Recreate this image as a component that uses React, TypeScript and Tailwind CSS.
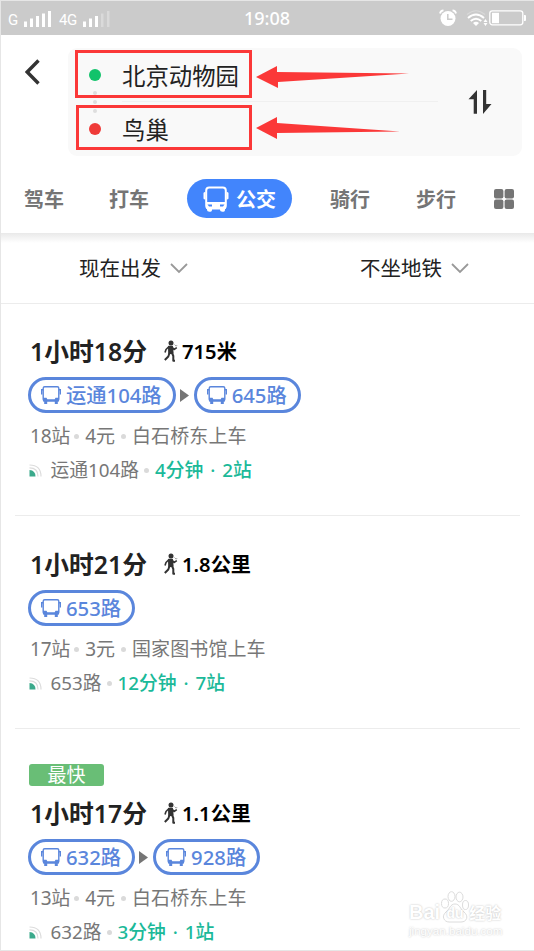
interface Route {
  badge?: string;
  duration: string;
  walk: string;
  lines: string[];
  stops: string;
  price: string;
  board: string;
  next: string;
  wait: string;
  away: string;
}

const routes: Route[] = [
  {
    duration: '1小时18分',
    walk: '715米',
    lines: ['运通104路', '645路'],
    stops: '18站',
    price: '4元',
    board: '白石桥东上车',
    next: '运通104路',
    wait: '4分钟',
    away: '2站',
  },
  {
    duration: '1小时21分',
    walk: '1.8公里',
    lines: ['653路'],
    stops: '17站',
    price: '3元',
    board: '国家图书馆上车',
    next: '653路',
    wait: '12分钟',
    away: '7站',
  },
  {
    badge: '最快',
    duration: '1小时17分',
    walk: '1.1公里',
    lines: ['632路', '928路'],
    stops: '13站',
    price: '4元',
    board: '白石桥东上车',
    next: '632路',
    wait: '3分钟',
    away: '1站',
  },
];

function StatusBar() {
  return (
    <div className="h-[34px] shrink-0 bg-[#cbcbcb] text-white flex items-center justify-between pl-[7px] pr-[8px]">
      <div className="flex items-center w-[180px] font-['Roboto'] text-[15px]">
        <span className="w-[15px] mt-[4px]">G</span>
        <svg width="28" height="18" viewBox="0 0 28 18" fill="currentColor" className="mt-px">
          <path d="M1 11.5h3V17H1zM7 8.5h3V17H7zM13 6h3v11h-3zM19 3.5h3V17h-3zM25 1h3v16h-3z" />
        </svg>
        <span className="ml-[8px] w-[23px] mt-[4px] tracking-[-0.5px]">4G</span>
        <svg width="28" height="18" viewBox="0 0 28 18" fill="currentColor" className="mt-px">
          <path d="M1 11.5h3V17H1zM7 8.5h3V17H7zM13 6h3v11h-3z" />
          <path d="M19 3.5h2.5V17H19zM25 1h2.5v16H25z" opacity=".3" />
        </svg>
      </div>
      <span className="text-[18px] leading-6 font-medium">19:08</span>
      <div className="flex items-center justify-end w-[180px]">
        <svg width="18" height="18" viewBox="0 0 18 18" fill="none">
          <circle cx="9" cy="9.5" r="7.500" fill="#fff" />
          <path d="M1 4.500Q1.500 1.500 4.500 1.300M17 4.500Q16.500 1.500 13.500 1.300" stroke="#fff" strokeWidth="1.800" />
          <path d="M8.800 5v5.200h4.700" stroke="#cbcbcb" strokeWidth="1.500" />
        </svg>
        <svg width="22" height="18" viewBox="0 0 22 18" fill="none" className="ml-[9px]">
          <path d="M1 5.500Q10 -2 19 5.500" stroke="#fff" strokeWidth="1.200" opacity=".25" />
          <path d="M2 9Q10 2 18 9M4.700 12Q10 7.500 15.300 12" stroke="#fff" strokeWidth="1.900" />
          <path d="M7 14Q10 11.500 13 14L10 17z" fill="#fff" />
          <path d="m19.500 10 2 3h-4zM19.500 17l2-3h-4z" fill="#fff" />
        </svg>
        <svg width="37" height="18" viewBox="0 0 37 18" fill="none" className="ml-px">
          <rect x=".8" y="1.800" width="33" height="14" rx="2.500" stroke="#fff" strokeWidth="1.300" />
          <path d="M3 3.800h7v10.400H3z" fill="#fff" />
          <path d="M35 6h1q1 0 1 1v4q0 1-1 1h-1z" fill="#fff" />
        </svg>
      </div>
    </div>
  );
}

function TabBusIcon() {
  return (
    <svg width="26" height="26" viewBox="0 0 26 26" fill="none">
      <rect x="3.200" y="1.500" width="19.600" height="21" rx="3" stroke="#fff" strokeWidth="2" />
      <path d="M3 16h20v6q0 1-1 1H4q-1 0-1-1z" fill="#fff" />
      <path d="M.5 7q0-1 2-1v7.500q-2 0-2-1zM25.500 7q0-1-2-1v7.500q2 0 2-1zM4 22h5v2q0 1.800-1.500 1.800h-1Q4 25.800 4 24zM17 22h5v2q0 1.800-1.500 1.800h-1Q17 25.800 17 24z" fill="#fff" />
      <path d="M4.500 18.500h4.500v2H6zM21.500 18.500H17v2h3z" fill="#4285fc" />
    </svg>
  );
}

function BusIcon() {
  return (
    <svg width="20" height="20" viewBox="0 0 20 20" fill="none">
      <rect x="2.200" y="1.800" width="15.600" height="14" rx="1.500" stroke="#5a86dc" strokeWidth="1.400" />
      <path d="M2 12.800h3.500l.8 1.400h7.400l.8-1.400H18v3.700H2z" fill="#5a86dc" />
      <path d="M3.200 16h3v3h-3zM13.800 16h3v3h-3z" fill="#5a86dc" />
      <path d="M2.200 4.700H.7v4.800M17.800 4.700h1.500v4.800" stroke="#5a86dc" strokeWidth="1.400" />
    </svg>
  );
}

function WalkIcon() {
  return (
    <svg width="14" height="22" viewBox="0 0 14 22" fill="none" stroke="#333" strokeLinejoin="round">
      <circle cx="7" cy="3" r="2.500" fill="#333" stroke="none" />
      <path d="M4.800 6.500h3.400L8.800 13 5 13.500z" fill="#333" strokeWidth="1.600" />
      <path d="m5 6.500-3 3-1 3M8 7l2 2.500 2.800-1.800" strokeWidth="1.600" />
      <path d="M5.500 13 4.300 16.500.8 20M7.800 12.500l1.500 3.500v4.700h1.700" strokeWidth="2" />
      <path d="m10.500 4.500 1.700 1.700 1-1.200" strokeWidth=".9" opacity=".5" />
    </svg>
  );
}

function SignalIcon() {
  return (
    <svg width="13" height="13" viewBox="0 0 13 13" fill="none">
      <path d="M.5 6q6 .5 6 6.500h-6z" fill="#3ba98b" />
      <path d="M.5 3.800q8.500 0 8.500 8.700M.5 1q11.500 0 11.500 11.500" stroke="#dcdcdc" strokeWidth="1.200" />
    </svg>
  );
}

function Chevron() {
  return (
    <svg width="18" height="11" viewBox="0 0 18 11" fill="none" className="ml-[9px]">
      <path d="m1 1 8 8 8-8" stroke="#999" strokeWidth="1.800" />
    </svg>
  );
}

function Dot() {
  return <i className="block size-[5px] rounded-full bg-[#dadada]" />;
}

function SearchHeader() {
  return (
    <div className="relative h-[121px] flex pt-[13px] pl-[67px]">
      <svg width="16" height="26" viewBox="0 0 16 26" fill="none" className="absolute left-[24px] top-[24px]">
        <path d="M13.500 1.500 2.200 13l11.300 11.500" stroke="#333" strokeWidth="3.400" />
      </svg>
      <div className="w-[454px] h-[108px] rounded-[9px] bg-[#f9f9f9] flex text-[23.4px] text-[#222]">
        <div className="w-[26px] ml-[14px] flex flex-col items-center pt-[21px]">
          <i className="size-[12px] rounded-full bg-[#12c36b]" />
          <i className="mt-[10px] size-[4px] rounded-full bg-[#dedede]" />
          <i className="mt-[5px] size-[4px] rounded-full bg-[#dedede]" />
          <i className="mt-[5px] size-[4px] rounded-full bg-[#dedede]" />
          <i className="mt-[10px] size-[12px] rounded-full bg-[#ef3a38]" />
        </div>
        <div className="ml-[14px] w-[316px]">
          <div className="h-[54px] border-b border-[#f0f0f0] pt-[13px] leading-[30px]">北京动物园</div>
          <div className="pt-[13px] leading-[30px]">鸟巢</div>
        </div>
        <svg width="24" height="26" viewBox="0 0 24 26" fill="#333" className="ml-[30px] mt-[41px]">
          <path d="M9 1v23.700H5.700V10.300H.5zM15 1h3.200v14h5.300L15 25z" />
        </svg>
      </div>

      {/* callouts over the two inputs */}
      <div className="absolute left-[74px] top-[15px] w-[177px] h-[48px] border-[3px] border-[#fb3838]" />
      <div className="absolute left-[75px] top-[70px] w-[176px] h-[45px] border-[3px] border-[#fb3838]" />
      <svg width="156" height="76" viewBox="0 0 156 76" fill="#fb3838" className="absolute left-[254px] top-[30px]">
        <path d="m1 12 21-11v6l132 1.500-131 8.500v6zM1 63l21-11v6l123 8.500L22 68v6z" />
      </svg>
    </div>
  );
}

function Tabs() {
  return (
    <div className="h-[77px] flex items-center pl-[23px] pt-[8px] text-[20px] font-bold text-[#757575]">
      <span className="w-[85px] pt-[2px]">驾车</span>
      <span className="w-[78px] pt-[2px]">打车</span>
      <div className="w-[105px] h-[39px] rounded-full bg-[#4285fc] text-white flex items-center pl-[16px]">
        <TabBusIcon />
        <span className="ml-[7px] pt-[2px]">公交</span>
      </div>
      <span className="ml-[38px] w-[86px] pt-[2px]">骑行</span>
      <span className="w-[78px] pt-[2px]">步行</span>
      <svg width="20" height="20" viewBox="0 0 20 20" fill="#757575">
        <rect width="9.400" height="9.400" rx="2" />
        <rect x="10.600" width="9.400" height="9.400" rx="2" />
        <rect y="10.600" width="9.400" height="9.400" rx="2" />
        <rect x="10.600" y="10.600" width="9.400" height="9.400" rx="2" />
      </svg>
    </div>
  );
}

function RouteItem({ route, className }: { route: Route; className: string }) {
  return (
    <div className={className}>
      {route.badge && (
        <div className="w-[75px] h-[22px] ml-px mb-[10px] rounded-[3px] bg-[#69be76] text-white text-[19px] leading-[23px] text-center">
          {route.badge}
        </div>
      )}
      <div className="h-[34px] flex items-center whitespace-nowrap">
        <span className="w-[136px] pl-[2px] text-[24.8px] leading-[34px] font-semibold text-[#222]">{route.duration}</span>
        <WalkIcon />
        <span className="ml-[4px] text-[20.2px] font-semibold text-black">{route.walk}</span>
      </div>
      <div className="mt-[9px] h-[36px] flex items-center">
        {route.lines.map((line, index) => (
          <div key={line} className="flex items-center h-full">
            {index > 0 && (
              <svg width="10" height="13" viewBox="0 0 10 13" fill="#757575" className="mx-[4px]">
                <path d="M0 0v13l9-6.500z" />
              </svg>
            )}
            <div className="h-full rounded-full border-[3px] border-[#5a86dc] text-[#5a86dc] text-[20.3px] font-medium flex items-center pl-[10px] pr-[11px] whitespace-nowrap">
              <BusIcon />
              <span className="ml-[5px]">{line}</span>
            </div>
          </div>
        ))}
      </div>
      <div className="mt-[11px] h-[24px] pl-[2px] flex items-center text-[19px] text-[#777] whitespace-nowrap">
        <span className="mr-[4px] tracking-[-0.2px]">{route.stops}</span>
        <Dot />
        <span className="ml-[6px] mr-[6px]">{route.price}</span>
        <Dot />
        <span className="ml-[6px] tracking-[0.1px]">{route.board}</span>
      </div>
      <div className="mt-[10px] h-[24px] pl-px flex items-center text-[18.8px] text-[#777] whitespace-nowrap">
        <SignalIcon />
        <span className="ml-[8.500px] mr-[5px]">{route.next}</span>
        <Dot />
        <span className="ml-[6px] font-medium text-[#1bb999] [word-spacing:2px]">
          {route.wait} · {route.away}
        </span>
      </div>
    </div>
  );
}

function Watermark() {
  return (
    <div className="absolute left-[408px] bottom-[12px] w-[98px] text-white font-['Liberation_Sans'] [text-shadow:0_0_2px_#bbb]">
      <div className="flex items-end text-[20px] leading-[21px] font-bold">
        <span>Bai</span>
        <div className="relative ml-[1px] w-[28px] h-[32px] text-center">
          <svg width="28" height="32" viewBox="0 0 28 32" fill="#fff" stroke="#dcdcdc" className="absolute inset-0">
            <ellipse cx="4" cy="12.500" rx="3.500" ry="4.500" />
            <ellipse cx="10.500" cy="5.500" rx="3.500" ry="4.800" />
            <ellipse cx="18.500" cy="6" rx="3.500" ry="4.800" />
            <ellipse cx="24.500" cy="14" rx="3" ry="4.500" />
            <path d="M14 13c-5 0-5 5-9 8-5 4-2 10 3 10h12c6 0 8-6 3-10-4-3-4-8-9-8z" />
          </svg>
          <span className="relative top-[14px] text-[14px] leading-[16px] block">du</span>
        </div>
        <span className="text-[16px] font-['Noto_Sans_CJK_SC']">经验</span>
      </div>
      <div className="mt-px text-[11.600px] leading-[14px]">jingyan.baidu.com</div>
    </div>
  );
}

export default function App() {
  return (
    <div className="relative w-[534px] h-[951px] overflow-hidden flex flex-col bg-white border border-r-0 border-[#e6e6e6] font-['Noto_Sans','Noto_Sans_CJK_SC',sans-serif]">
      <StatusBar />
      <SearchHeader />
      <Tabs />
      <div className="h-[10px] shrink-0 bg-gradient-to-b from-[#e9e9e9] to-white" />
      <div className="h-[61px] shrink-0 border-b border-[#ececec] flex pl-[78px] pb-[10px] items-center text-[20.5px] text-[#222]">
        <div className="w-[281px] flex items-center">
          现在出发
          <Chevron />
        </div>
        <div className="flex items-center">
          不坐地铁
          <Chevron />
        </div>
      </div>
      <RouteItem route={routes[0]} className="h-[211px] shrink-0 pl-[27px] pt-[30px]" />
      <div className="h-px shrink-0 ml-[14px] mr-[14px] bg-[#ececec]" />
      <RouteItem route={routes[1]} className="h-[212px] shrink-0 pl-[27px] pt-[31px]" />
      <div className="h-px shrink-0 ml-[14px] mr-[14px] bg-[#ececec]" />
      <RouteItem route={routes[2]} className="shrink-0 pl-[27px] pt-[35px]" />
      <Watermark />
    </div>
  );
}
